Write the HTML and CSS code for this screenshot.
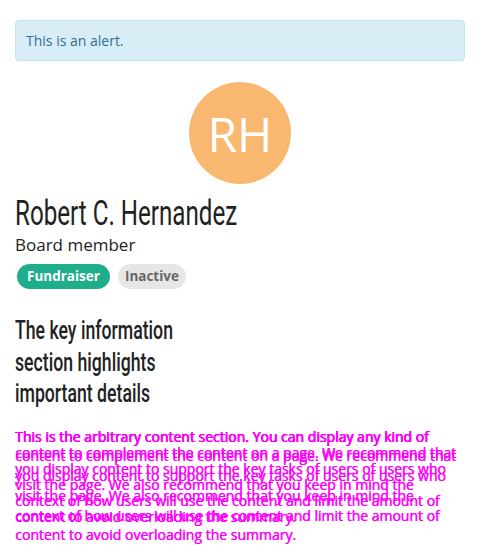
FILE: index.html
```html
<!DOCTYPE html>
<html lang="en">
<head>
<meta charset="utf-8">
<title>Profile</title>
<link rel="stylesheet" href="styles.css">
</head>
<body>
<div class="page">
  <div class="alert">This is an alert.</div>
  <div class="avatar-row"><div class="avatar">RH</div></div>
  <h1 class="name"><span class="narrow">Robert C. Hernandez</span></h1>
  <div class="role">Board member</div>
  <div class="badges">
    <span class="badge badge-green">Fundraiser</span>
    <span class="badge badge-grey">Inactive</span>
  </div>
  <h2 class="key">
    <span class="key-line">The key information</span>
    <span class="key-line">section highlights</span>
    <span class="key-line">important details</span>
  </h2>
  <div class="content">
    <p class="content-b">This is the arbitrary content section. You can display any kind of content to complement the content on a page. We recommend that you display content to support the key tasks of users of users who visit the page. We also recommend that you keep in mind the context of how users will use the content and limit the amount of content to avoid overloading the summary.</p>
    <p class="content-a">This is the arbitrary content section. You can display any kind of content to complement the content on a page. We recommend that you display content to support the key tasks of users of users who visit the page. We also recommend that you keep in mind the context of how users will use the content and limit the amount of content to avoid overloading the summary.</p>
  </div>
</div>
</body>
</html>
```

FILE: styles.css
```css
html, body {
  margin: 0;
  padding: 0;
  background: #ffffff;
}
.page {
  padding: 20px 15px 0 15px;
  font-family: "Open Sans", "DejaVu Sans", sans-serif;
  color: #222222;
}
.alert {
  background: #d9edf7;
  border: 1px solid #bce8f1;
  border-radius: 4px;
  color: #31708f;
  font-size: 14px;
  line-height: 19px;
  padding: 10px;
}
.avatar-row {
  display: flex;
  justify-content: center;
  margin-top: 21px;
}
.avatar {
  width: 102px;
  height: 102px;
  border-radius: 50%;
  background: #f8b86f;
  color: #ffffff;
  display: flex;
  align-items: center;
  justify-content: center;
  font-family: "Open Sans", sans-serif;
  font-size: 48px;
}
.name {
  margin: 10px 0 0 0;
  font-family: Roboto, "DejaVu Sans", sans-serif;
  font-weight: 400;
  font-size: 35px;
  line-height: 40px;
  color: #222222;
}
.narrow {
  display: inline-block;
  transform: scaleX(0.69);
  transform-origin: left center;
  white-space: nowrap;
}
.role {
  font-size: 17px;
  line-height: 22px;
}
.badges {
  display: flex;
  gap: 8px;
  margin-top: 8px;
  padding-left: 2px;
}
.badge {
  font-size: 13.5px;
  font-weight: 700;
  line-height: 25px;
  padding: 0 10px;
  border-radius: 13px;
}
.badge-green {
  background: #1fae8c;
  color: #ffffff;
}
.badge-grey {
  background: #e6e6e6;
  color: #666666;
  padding: 0 7px;
}
.key {
  margin: 26px 0 0 0;
  font-family: Roboto, "DejaVu Sans", sans-serif;
  font-weight: 500;
  font-size: 26px;
  line-height: 31.5px;
  color: #222222;
}
.key-line {
  display: block;
  width: max-content;
  transform: scaleX(0.68);
  transform-origin: left center;
}
.content {
  position: relative;
  margin-top: 17px;
  width: 450px;
}
.content p {
  margin: 0;
  font-size: 14px;
  font-weight: 400;
  color: #ff00ff;
  text-shadow: 0.5px 0 0 #ff00ff;
}
.content-b {
  line-height: 19.8px;
}
.content-a {
  position: absolute;
  top: 2px;
  left: 0;
  right: 0;
  line-height: 16px;
}
```
